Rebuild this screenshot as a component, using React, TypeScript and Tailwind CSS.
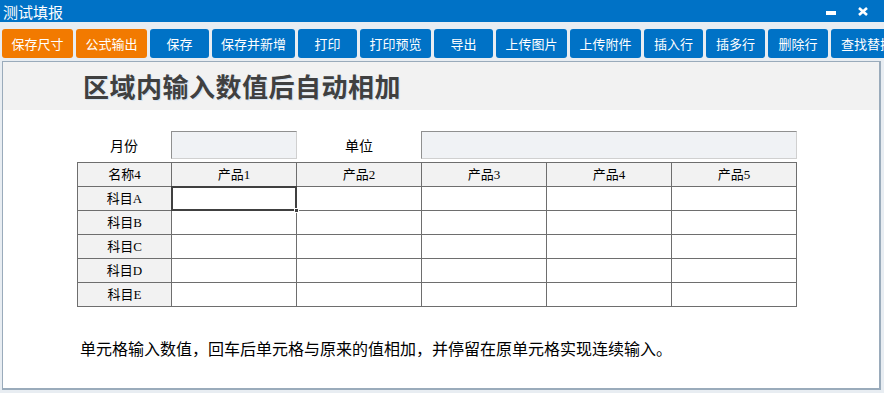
import React from 'react';

const buttons = [
    { label: '保存尺寸', w: 71, orange: true },
    { label: '公式输出', w: 71, orange: true },
    { label: '保存', w: 59 },
    { label: '保存并新增', w: 83 },
    { label: '打印', w: 59 },
    { label: '打印预览', w: 71 },
    { label: '导出', w: 59 },
    { label: '上传图片', w: 71 },
    { label: '上传附件', w: 71 },
    { label: '插入行', w: 59 },
    { label: '插多行', w: 59 },
    { label: '删除行', w: 60 },
    { label: '查找替换', w: 72 },
];

const cols = ['产品1', '产品2', '产品3', '产品4', '产品5'];
const rows = ['科目A', '科目B', '科目C', '科目D', '科目E'];

const cjk = { fontFamily: '"Noto Sans CJK SC", "Noto Sans", sans-serif' };
const serif = { fontFamily: '"Liberation Serif", "Noto Sans CJK SC", serif' };

export default function App() {
    return (
        <div className="w-[884px] h-[393px] bg-[#e8edf2] flex flex-col overflow-hidden" style={cjk}>
            {/* Title bar */}
            <div className="h-[22px] bg-[#0072c6] flex items-center justify-between shrink-0">
                <span className="pl-[3px] text-white text-[15px] leading-none">测试填报</span>
                <div className="flex items-center gap-[22px] pr-[16px]">
                    <div className="w-[10px] h-[4px] bg-white mt-[3px]"></div>
                    <svg width="10" height="9" viewBox="0 0 10 9">
                        <path d="M1 1 L9 8 M9 1 L1 8" stroke="white" strokeWidth="2.6" />
                    </svg>
                </div>
            </div>

            {/* Toolbar */}
            <div className="flex gap-[3px] pl-[2px] pt-[7px] shrink-0 overflow-hidden">
                {buttons.map((b) => (
                    <button
                        key={b.label}
                        className={`h-[29px] shrink-0 rounded-[3px] text-white text-[13px] leading-none flex items-center justify-center ${b.orange ? 'bg-[#f27a00]' : 'bg-[#0072c6]'}`}
                        style={{ width: b.w }}
                    >
                        {b.label}
                    </button>
                ))}
            </div>

            {/* Content panel */}
            <div className="mt-[3px] ml-[2px] mr-[3px] h-[329px] bg-white border-l border-t border-r-2 border-b-2 border-[#9aabbb] shrink-0">
                <div className="h-[48px] bg-[#f2f2f2] flex items-center pl-[80px]">
                    <h1 className="text-[26px] font-bold text-[#404040] leading-none tracking-[0.5px]" style={{ textShadow: '1px 1px 0 #d8e4f0' }}>
                        区域内输入数值后自动相加
                    </h1>
                </div>

                <div className="pl-[74px] pt-[21px]">
                    {/* Fields */}
                    <div className="flex h-[28px] items-stretch">
                        <div className="w-[94px] flex items-center justify-center text-[14px] text-black">月份</div>
                        <div className="w-[126px] bg-[#f0f2f5] border-t border-l border-[#909090] border-r border-b border-r-[#d0d0d0] border-b-[#d0d0d0]"></div>
                        <div className="w-[124px] flex items-center justify-center text-[14px] text-black">单位</div>
                        <div className="w-[376px] bg-[#f0f2f5] border-t border-l border-[#909090] border-r border-b border-r-[#d0d0d0] border-b-[#d0d0d0]"></div>
                    </div>

                    {/* Table */}
                    <table className="mt-[3px] border-collapse table-fixed text-[13px] text-black" style={serif}>
                        <colgroup>
                            <col className="w-[94px]" />
                            {cols.map((c) => (
                                <col key={c} className="w-[125px]" />
                            ))}
                        </colgroup>
                        <thead>
                            <tr className="h-[24px] bg-[#f2f2f2]">
                                <th className="border border-[#6e6e6e] font-normal p-0">名称4</th>
                                {cols.map((c) => (
                                    <th key={c} className="border border-[#6e6e6e] font-normal p-0">{c}</th>
                                ))}
                            </tr>
                        </thead>
                        <tbody>
                            {rows.map((r, ri) => (
                                <tr key={r} className="h-[24px]">
                                    <td className="border border-[#6e6e6e] bg-[#f2f2f2] text-center p-0">{r}</td>
                                    {cols.map((c, ci) => (
                                        <td key={c} className="border border-[#6e6e6e] p-0 relative">
                                            {ri === 0 && ci === 0 && (
                                                <div className="absolute -left-px -top-px -right-px -bottom-px border-2 border-[#404040]">
                                                    <div className="absolute -right-[4px] -bottom-[4px] w-[5px] h-[5px] bg-[#404040] border border-white"></div>
                                                </div>
                                            )}
                                        </td>
                                    ))}
                                </tr>
                            ))}
                        </tbody>
                    </table>
                </div>

                <p className="pl-[77px] mt-[33px] text-[16px] text-black leading-none">
                    单元格输入数值，回车后单元格与原来的值相加，并停留在原单元格实现连续输入。
                </p>
            </div>
        </div>
    );
}
